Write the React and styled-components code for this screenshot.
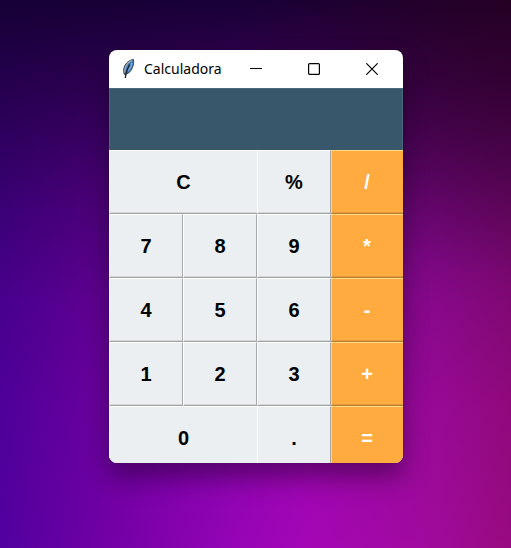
import React, { useState } from "react";
import styled, { createGlobalStyle, css } from "styled-components";

const GlobalStyle = createGlobalStyle`
  *, *::before, *::after { box-sizing: border-box; }
  body { margin: 0; }
`;

const Desktop = styled.main`
  min-height: 100vh;
  padding: 50px 108px 85px 109px;
  background:
    radial-gradient(ellipse 55% 50% at 100% 0%, rgba(50, 0, 20, 0.5), transparent 100%),
    linear-gradient(to bottom, rgba(20, 0, 50, 0.97) 0%, rgba(22, 0, 52, 0.72) 18%, rgba(24, 0, 56, 0.42) 37%, rgba(26, 0, 60, 0.19) 55%, rgba(28, 0, 64, 0.07) 74%, transparent 100%),
    linear-gradient(to right, #5200a0 0%, #7400a6 22%, #9404b6 45%, #a406b6 60%, #a00a9a 86%, #980a80 100%);
`;

const Window = styled.section`
  width: 100%;
  overflow: hidden;
  border-radius: 8px;
  background: #fff;
  box-shadow: 0 14px 26px rgba(10, 0, 20, 0.42), 0 0 1px rgba(40, 20, 60, 0.8);
`;

const TitleBar = styled.header`
  display: flex;
  align-items: center;
  height: 38px;
  padding: 0 2px 0 12px;
  color: #000;
`;

const Title = styled.h1`
  flex: 1;
  margin: 0;
  padding-left: 7px;
  font: 400 14px/20px "Noto Sans", "Open Sans", sans-serif;
  white-space: nowrap;
`;

const WindowButton = styled.button`
  display: grid;
  place-items: center;
  width: 58px;
  height: 38px;
  padding: 0;
  border: 0;
  background: transparent;
  color: #000;
`;

const Display = styled.output`
  display: flex;
  align-items: center;
  justify-content: flex-end;
  height: 62px;
  padding: 0 12px;
  border: 1px solid #4b697b;
  border-bottom: 0;
  background: #38576b;
  color: #fff;
  font: 700 20px/24px "Liberation Sans", Arial, sans-serif;
`;

/* The outermost bevels on the right and bottom run past the window edge. */
const Keypad = styled.div`
  display: grid;
  grid-template-columns: repeat(4, 1fr);
  grid-auto-rows: 64px;
  margin: 0 -2px -7px 0;
`;

const operatorColors = css`
  padding: 0 2px 0 0;
  border-color: #ffe08a #b67a32 #b67a32 #f3d67c;
  background: #ffab40;
  color: #fff;
`;

const Key = styled.button`
  grid-column: span ${({ $span }) => $span || 1};
  padding: 0;
  border: 1px solid;
  border-color: #fff #a6a8aa #a0a2a4 #fff;
  border-right-width: ${({ $span }) => ($span ? 0 : "1px")};
  border-radius: 0;
  background: #eceff1;
  box-shadow: inset 0 -1px 0 rgba(0, 0, 0, 0.1);
  color: #000;
  font: 700 20px/24px "Liberation Sans", Arial, sans-serif;
  ${({ $operator }) => $operator && operatorColors}
`;

const KEYS = [
  { label: "C", span: 2 }, { label: "%" }, { label: "/", operator: true },
  { label: "7" }, { label: "8" }, { label: "9" }, { label: "*", operator: true },
  { label: "4" }, { label: "5" }, { label: "6" }, { label: "-", operator: true },
  { label: "1" }, { label: "2" }, { label: "3" }, { label: "+", operator: true },
  { label: "0", span: 2 }, { label: "." }, { label: "=", operator: true },
];

function FeatherIcon() {
  return (
    <svg width="16" height="20" viewBox="0 0 16 20" aria-hidden="true">
      <path d="M12.5 0.6C8.8 0.6 4.8 3.8 3.2 8C2.4 10.8 2.6 13.5 3.4 15.6L7.6 14C11 11 13.2 6 12.5 0.6Z" fill="#3e78b8" stroke="#3a434c" />
      <path d="M11.2 1.6C8.6 2.2 6 4.5 4.4 8.4C3.8 10.4 3.8 12 4 13.6" fill="none" stroke="#a2acb4" strokeWidth="1.3" />
      <path d="M11 4C10.3 7.5 8.5 10.5 6.8 12" fill="none" stroke="#72a9df" strokeWidth="1.6" />
      <path d="M8.6 5.5C6.6 9 5 13 4.2 19" fill="none" stroke="#171d25" strokeWidth="1.3" />
    </svg>
  );
}

function MinimizeIcon() {
  return (
    <svg width="12" height="12" viewBox="0 0 12 12" aria-hidden="true">
      <path d="M0 5.5H12" stroke="currentColor" />
    </svg>
  );
}

function MaximizeIcon() {
  return (
    <svg width="12" height="12" viewBox="0 0 12 12" aria-hidden="true">
      <rect x="0.6" y="0.6" width="10.8" height="10.8" rx="1" fill="none" stroke="currentColor" strokeWidth="1.2" />
    </svg>
  );
}

function CloseIcon() {
  return (
    <svg width="12" height="12" viewBox="0 0 12 12" aria-hidden="true">
      <path d="M0.3 0.3L11.7 11.7M11.7 0.3L0.3 11.7" stroke="currentColor" strokeWidth="1.2" />
    </svg>
  );
}

function evaluate(expression) {
  const tokens = expression.match(/\d*\.?\d+|[-+*/%]/g) || [];
  const terms = [];
  let operator = "+";
  tokens.forEach((token) => {
    if (/^[-+*/%]$/.test(token)) {
      operator = token;
      return;
    }
    const value = Number(token);
    if (operator === "+") terms.push(value);
    else if (operator === "-") terms.push(-value);
    else {
      const left = terms.pop() || 0;
      if (operator === "*") terms.push(left * value);
      else if (operator === "/") terms.push(left / value);
      else terms.push(left % value);
    }
  });
  return String(terms.reduce((sum, value) => sum + value, 0));
}

export default function App() {
  const [expression, setExpression] = useState("");

  const press = (label) => {
    if (label === "C") setExpression("");
    else if (label === "=") setExpression(evaluate(expression));
    else setExpression(expression + label);
  };

  return (
    <>
      <GlobalStyle />
      <Desktop>
        <Window aria-labelledby="window-title">
          <TitleBar>
            <FeatherIcon />
            <Title id="window-title">Calculadora</Title>
            <WindowButton type="button" aria-label="Minimizar"><MinimizeIcon /></WindowButton>
            <WindowButton type="button" aria-label="Maximizar"><MaximizeIcon /></WindowButton>
            <WindowButton type="button" aria-label="Fechar"><CloseIcon /></WindowButton>
          </TitleBar>
          <Display>{expression}</Display>
          <Keypad>
            {KEYS.map(({ label, span, operator }) => (
              <Key key={label} type="button" $span={span} $operator={operator} onClick={() => press(label)}>
                {label}
              </Key>
            ))}
          </Keypad>
        </Window>
      </Desktop>
    </>
  );
}
